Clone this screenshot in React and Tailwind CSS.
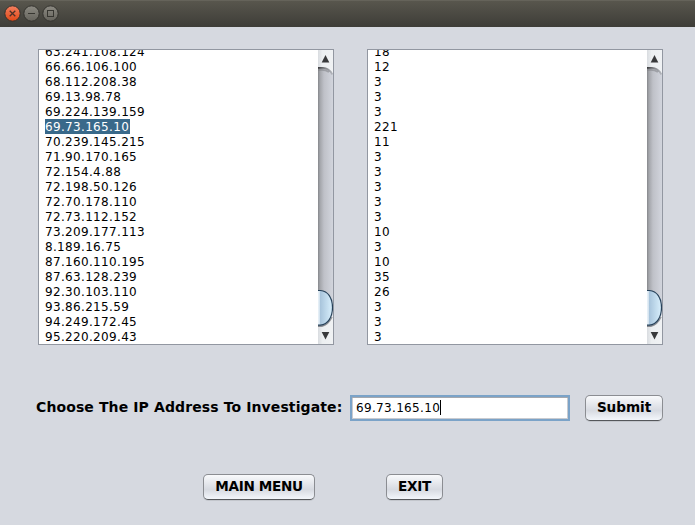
import React from "react";

const addresses = [
  "63.241.108.124", "66.66.106.100", "68.112.208.38", "69.13.98.78", "69.224.139.159",
  "69.73.165.10", "70.239.145.215", "71.90.170.165", "72.154.4.88", "72.198.50.126",
  "72.70.178.110", "72.73.112.152", "73.209.177.113", "8.189.16.75", "87.160.110.195",
  "87.63.128.239", "92.30.103.110", "93.86.215.59", "94.249.172.45", "95.220.209.43",
];
const counts = ["18", "12", "3", "3", "3", "221", "11", "3", "3", "3", "3", "3", "10", "3", "10", "35", "26", "3", "3", "3"];

function ScrollBar({ id }) {
  return (
    <svg className="block h-[294px] w-[15px] shrink-0" viewBox="0 0 15 294">
      <defs>
        <linearGradient id={`${id}-track`} x1="0" x2="1" y1="0" y2="0">
          <stop offset="0" stopColor="#85878b" />
          <stop offset=".13" stopColor="#a3a5aa" />
          <stop offset=".4" stopColor="#bfc1c8" />
          <stop offset="1" stopColor="#d2d5dd" />
        </linearGradient>
        <linearGradient id={`${id}-thumb`} x1="0" x2="1" y1="0" y2="0">
          <stop offset="0" stopColor="#c9dceb" />
          <stop offset=".13" stopColor="#eef5fa" />
          <stop offset=".22" stopColor="#a9c5dc" />
          <stop offset=".6" stopColor="#c0daec" />
          <stop offset="1" stopColor="#d9effc" />
        </linearGradient>
        <linearGradient id={`${id}-cap`} x1="0" x2="1" y1="0" y2="0">
          <stop offset="0" stopColor="#d9dce0" />
          <stop offset=".3" stopColor="#eceff1" />
          <stop offset="1" stopColor="#f0f2f4" />
        </linearGradient>
        <linearGradient id={`${id}-shade`} gradientUnits="userSpaceOnUse" x1="0" x2="15" y1="0" y2="0">
          <stop offset="0" stopColor="#37383a" />
          <stop offset=".45" stopColor="#808286" />
          <stop offset="1" stopColor="#b8bbc1" />
        </linearGradient>
      </defs>
      <rect width="15" height="294" fill={`url(#${id}-track)`} />
      <path d="M0 0H15V25Q12 17.500 5 17.500H0Z" fill={`url(#${id}-cap)`} />
      <path d="M0 17.800H5Q11 17.800 14.500 24.500" fill="none" stroke={`url(#${id}-shade)`} strokeWidth="1.800" />
      <path d="M0 19.800H4Q8 19.800 11 22" fill="none" stroke="#77797e" strokeOpacity=".5" strokeWidth="1.800" />
      <path d="M0 276.500H4Q12 275 15 264V294H0Z" fill={`url(#${id}-cap)`} />
      <path d="M0 276.200H4Q10 275 14 267" fill="none" stroke="#66686c" strokeWidth="1.600" strokeOpacity=".6" />
      <path d="M-1 240.500H2.500C10 241 14.500 248 14.500 257.500C14.500 267 10 274.500 2.500 275.200H-1Z" fill={`url(#${id}-thumb)`} stroke="#27425a" strokeWidth="1.200" />
      <path d="M7.500 5L11.300 12.500H3.700Z" fill="#38393b" />
      <path d="M3.700 282H11.300L7.500 289.500Z" fill="#38393b" />
    </svg>
  );
}

function ListPane({ id, items, selected }) {
  return (
    <section className="flex h-[296px] w-[296px] overflow-hidden border border-[#9297a1] bg-white">
      <div className="h-[294px] flex-1 overflow-hidden pl-1.5">
        <ul className="-mt-[6px] text-[12px] leading-[15px] tracking-[0.33px]">
          {items.map((item, i) => (
            <li key={i} className="flex h-[15px] whitespace-nowrap">
              <span className={i === selected ? "h-[15px] bg-[#39698a] pt-px pr-px text-white" : "pt-px"}>{item}</span>
            </li>
          ))}
        </ul>
      </div>
      <ScrollBar id={id} />
    </section>
  );
}

function Button({ className, children }) {
  return (
    <button className={`h-[26px] rounded-[5px] border border-[#8b8d92] border-b-[#55575b] bg-linear-to-b from-[#f9fafc] via-[#d7dae1] via-60% to-[#f3f6fb] pb-px text-[13.6px] font-bold whitespace-nowrap text-black shadow-[0_1px_0_#c3c6cc] ${className}`}>
      {children}
    </button>
  );
}

function WindowControl({ kind }) {
  const close = kind === "close";
  return (
    <svg className="block size-[17px]" viewBox="0 0 17 17">
      <defs>
        <linearGradient id={`control-${kind}`} x1="0" x2="0" y1="0" y2="1">
          <stop offset="0" stopColor={close ? "#f58060" : "#8c8a82"} />
          <stop offset="1" stopColor={close ? "#df4816" : "#65635c"} />
        </linearGradient>
      </defs>
      <circle cx="8.500" cy="8.500" r="7.700" fill={`url(#control-${kind})`} stroke="#34332e" strokeWidth="1" />
      {close && <path d="M5.700 5.700L11.300 11.300M11.300 5.700L5.700 11.300" stroke="#4d3027" strokeWidth="1.300" />}
      {kind === "minimize" && <path d="M5 8.500H12" stroke="#373631" />}
      {kind === "maximize" && <rect x="5.500" y="5.500" width="6" height="6" fill="none" stroke="#373631" />}
    </svg>
  );
}

export default function App() {
  return (
    <div className="flex h-[525px] w-[695px] flex-col overflow-hidden bg-[#d6d9e0] font-['DejaVu_Sans',sans-serif] text-black">
      <header className="flex h-[27px] shrink-0 gap-[2px] border-t border-[#65635a] bg-linear-to-b from-[#58564d] to-[#3e3d38] pt-[4px] pl-1">
        <WindowControl kind="close" />
        <WindowControl kind="minimize" />
        <WindowControl kind="maximize" />
      </header>
      <main className="pt-[22px]">
        <div className="flex gap-[33px] pl-[38px]">
          <ListPane id="addresses" items={addresses} selected={5} />
          <ListPane id="counts" items={counts} />
        </div>
        <div className="mt-[49px] flex h-[27px] items-center pl-9">
          <label className="w-[314px] text-[14px] font-bold tracking-[0.11px] whitespace-nowrap">Choose The IP Address To Investigate:</label>
          <div className="flex h-[26px] w-[220px] items-center border-2 border-[#7ba3c8] bg-white pl-1 text-[12px] tracking-[0.33px] shadow-[inset_0_1px_0_#a5a8ae,inset_1px_0_0_#c9cbd0,inset_-1px_0_0_#c9cbd0,inset_0_-1px_0_#c9cbd0]">
            <span>69.73.165.10</span>
            <span className="h-[15px] w-px bg-black" />
          </div>
          <Button className="ml-[15px] w-[78px] tracking-[-0.05px]">Submit</Button>
        </div>
        <div className="mt-[53px] flex gap-[71px] pl-[203px]">
          <Button className="w-[112px] tracking-[-0.35px]">MAIN MENU</Button>
          <Button className="w-[57px] tracking-[-0.3px]">EXIT</Button>
        </div>
      </main>
    </div>
  );
}
